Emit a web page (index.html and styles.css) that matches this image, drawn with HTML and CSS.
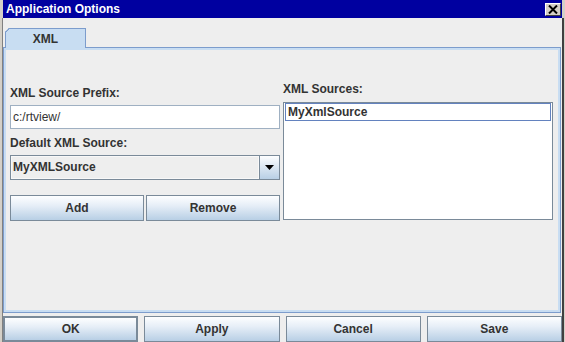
FILE: index.html
```html
<!DOCTYPE html>
<html lang="en">
<head>
    <meta charset="UTF-8">
    <title>Application Options</title>
    <link rel="stylesheet" href="styles.css">
</head>
<body>

    <div class="window">
        <div class="titlebar">
            <span class="title">Application Options</span>
            <div class="close">
                <svg width="10" height="9" viewBox="0 0 10 9">
                    <path d="M1 0.5 L9 8.5 M9 0.5 L1 8.5" stroke="#000" stroke-width="2"/>
                </svg>
            </div>
        </div>

        <div class="content">
            <div class="tabstrip">
                <div class="tab">XML</div>
            </div>

            <div class="tabpanel">
                <div class="col left">
                    <div class="label first">XML Source Prefix:</div>
                    <div class="field">c:/rtview/</div>
                    <div class="label">Default XML Source:</div>
                    <div class="combo">
                        <div class="combo-value">MyXMLSource</div>
                        <div class="combo-arrow">
                            <svg width="9" height="5" viewBox="0 0 9 5"><path d="M0 0 H9 L4.5 5 Z" fill="#000"/></svg>
                        </div>
                    </div>
                    <div class="pair">
                        <div class="btn">Add</div>
                        <div class="btn">Remove</div>
                    </div>
                </div>

                <div class="col right">
                    <div class="label first">XML Sources:</div>
                    <div class="list">
                        <div class="item selected">MyXmlSource</div>
                    </div>
                </div>
            </div>

            <div class="actions">
                <div class="btn default">OK</div>
                <div class="btn">Apply</div>
                <div class="btn">Cancel</div>
                <div class="btn">Save</div>
            </div>
        </div>
    </div>

</body>
</html>
```

FILE: styles.css
```css
body {
    margin: 0;
    padding: 0;
    background-color: #d4d0c8;
    font-family: "Liberation Sans", Arial, sans-serif;
    font-size: 12px;
    color: #333;
}
.window {
    width: 565px;
    height: 342px;
    box-sizing: border-box;
    padding: 0 1px 0 2px;
    background-color: #d4d0c8;
    display: flex;
    flex-direction: column;
}
.titlebar {
    height: 18px;
    margin-left: 1px;
    margin-right: 2px;
    background-color: #0000a0;
    color: white;
    display: flex;
    align-items: center;
    justify-content: space-between;
}
.title {
    font-weight: bold;
    font-size: 12px;
    padding-left: 3px;
}
.close {
    width: 16px;
    height: 13px;
    box-sizing: border-box;
    margin-right: 1px;
    background-color: #d4d0c8;
    border-top: 1px solid #fff;
    border-left: 1px solid #fff;
    border-right: 1px solid #404040;
    border-bottom: 1px solid #404040;
    display: flex;
    align-items: center;
    justify-content: center;
}
.content {
    flex: 1;
    background-color: #eeeeee;
    border-left: 1px solid #808080;
    border-right: 2px solid #404040;
    display: flex;
    flex-direction: column;
}
.tabstrip {
    height: 29px;
    display: flex;
    align-items: flex-end;
    padding-left: 2px;
}
.tab {
    width: 81px;
    height: 20px;
    box-sizing: border-box;
    background-color: #c8ddf2;
    border: 1px solid #7c9ccc;
    border-bottom: none;
    clip-path: polygon(4px 0, 100% 0, 100% 100%, 0 100%, 0 4px);
    position: relative;
    font-weight: bold;
    font-size: 12px;
    text-align: center;
    line-height: 20px;
    margin-bottom: -1px;
    z-index: 1;
}
.tab::before {
    content: "";
    position: absolute;
    left: -1px;
    top: -1px;
    width: 6px;
    height: 6px;
    background: linear-gradient(135deg, transparent 2.5px, #7c9ccc 2.5px, #7c9ccc 3.8px, transparent 3.8px);
}
.tabpanel {
    height: 266px;
    box-sizing: border-box;
    margin-right: 1px;
    border: 1px solid #7c9ccc;
    box-shadow: inset 0 0 0 2px #c8ddf2;
    display: grid;
    grid-template-columns: 270px 270px;
    column-gap: 3px;
    padding-left: 6px;
}
.col {
    display: flex;
    flex-direction: column;
}
.left {
    padding-top: 37px;
}
.right {
    padding-top: 33px;
}
.label {
    font-weight: bold;
    height: 16px;
    line-height: 16px;
    margin-top: 6px;
}
.label.first {
    margin-top: 0;
}
.field {
    margin-top: 4px;
    height: 24px;
    box-sizing: border-box;
    background-color: white;
    border: 1px solid #9fb0c2;
    line-height: 22px;
    padding-left: 2px;
}
.combo {
    margin-top: 4px;
    height: 25px;
    box-sizing: border-box;
    border: 1px solid #7a8a99;
    display: flex;
}
.combo-value {
    flex: 1;
    border: 1px solid #f8f8f8;
    background-color: #eeeeee;
    font-weight: bold;
    line-height: 21px;
    padding-left: 1px;
}
.combo-arrow {
    width: 19px;
    border-left: 1px solid #7a8a99;
    background: linear-gradient(#fdfeff, #dde8f3 45%, #b8cfe5);
    display: flex;
    align-items: center;
    justify-content: center;
}
.pair {
    margin-top: 15px;
    display: grid;
    grid-template-columns: 134px 134px;
    column-gap: 2px;
}
.btn {
    height: 26px;
    box-sizing: border-box;
    border: 1px solid #7a8a99;
    background: linear-gradient(#fdfeff, #e6eef7 40%, #b8cfe5);
    font-weight: bold;
    text-align: center;
    line-height: 24px;
}
.btn.default {
    border-width: 2px;
    line-height: 22px;
}
.list {
    margin-top: 5px;
    height: 118px;
    box-sizing: border-box;
    background-color: white;
    border: 1px solid #7a8a99;
}
.item {
    height: 18px;
    box-sizing: border-box;
    font-weight: bold;
    line-height: 16px;
    padding-left: 2px;
    margin: 0 1px;
}
.item.selected {
    border: 1px solid #6382bf;
}
.actions {
    margin-top: 3px;
    display: grid;
    grid-template-columns: repeat(4, 1fr);
    column-gap: 6px;
}
```
